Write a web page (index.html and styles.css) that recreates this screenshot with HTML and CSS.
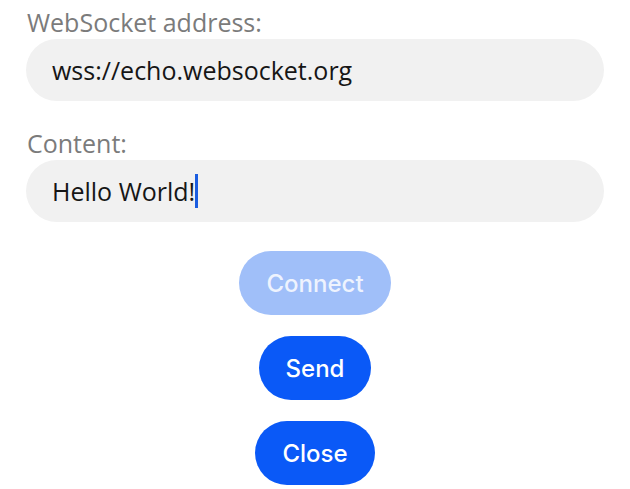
FILE: index.html
```html
<!DOCTYPE html>
<html>
<head>
<meta charset="utf-8">
<link rel="stylesheet" href="styles.css">
</head>
<body>
<div class="page">
  <div class="label">WebSocket address:</div>
  <div class="input">wss://echo.websocket.org</div>
  <div class="label label-second">Content:</div>
  <div class="input">Hello World!<span class="caret"></span></div>
  <div class="buttons">
    <button class="btn btn-disabled">Connect</button>
    <button class="btn">Send</button>
    <button class="btn">Close</button>
  </div>
</div>
</body>
</html>
```
FILE: styles.css
```css
html, body {
  margin: 0;
  padding: 0;
  background: #ffffff;
}
.page {
  padding: 0 26px;
  font-family: "Open Sans", "Noto Sans", sans-serif;
}
.label {
  font-size: 25px;
  line-height: 44px;
  height: 39px;
  color: #7b7b7b;
  padding-left: 1px;
}
.label-second {
  margin-top: 20px;
}
.input {
  height: 62px;
  border-radius: 31px;
  background: #f1f1f1;
  display: flex;
  align-items: center;
  padding-left: 26px;
  font-size: 25px;
  color: #161616;
}
.caret {
  display: inline-block;
  width: 3px;
  height: 34px;
  background: #1b5de0;
  margin-left: 0px;
}
.buttons {
  display: flex;
  flex-direction: column;
  align-items: center;
  gap: 21px;
  margin-top: 29px;
}
.btn {
  height: 64px;
  border: none;
  border-radius: 32px;
  background: #0a59f7;
  color: #ffffff;
  font-family: Inter, "Open Sans", sans-serif;
  font-size: 24px;
  font-weight: 500;
  padding: 0 27px;
}
.btn-disabled {
  background: #a0bff9;
  color: #eef3fe;
}
```
